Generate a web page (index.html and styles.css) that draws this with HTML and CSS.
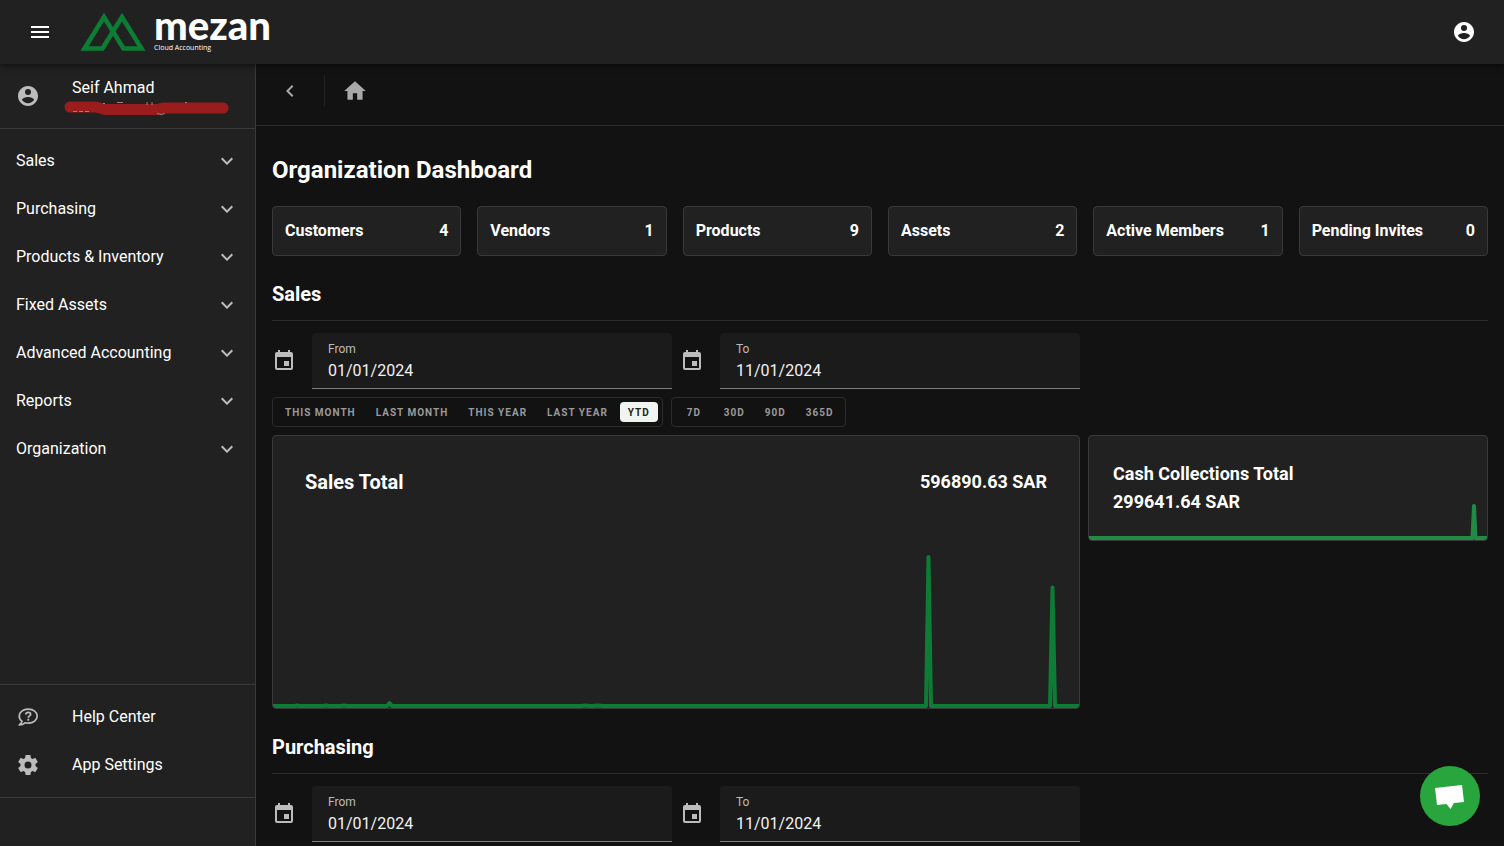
FILE: index.html
```html
<!DOCTYPE html>
<html lang="en">
<head>
    <meta charset="UTF-8">
    <meta name="viewport" content="width=device-width, initial-scale=1.0">
    <title>Mezan Cloud Accounting</title>
    <link rel="stylesheet" href="styles.css">
</head>
<body>

<!-- Shared icons -->
<svg class="icon-defs" aria-hidden="true">
    <symbol id="icon-account" viewBox="0 0 24 24">
        <path d="M12,2C6.48,2 2,6.48 2,12C2,17.52 6.48,22 12,22C17.52,22 22,17.52 22,12C22,6.48 17.52,2 12,2M12,5A3,3 0 0,1 15,8A3,3 0 0,1 12,11A3,3 0 0,1 9,8A3,3 0 0,1 12,5M12,19.2C9.5,19.2 7.29,17.92 6,15.98C6.03,13.99 10,12.9 12,12.9C14,12.9 17.97,13.99 18,15.98C16.71,17.92 14.5,19.2 12,19.2Z"/>
    </symbol>
    <symbol id="icon-chevron" viewBox="0 0 24 24">
        <path d="M7.41,8.58L12,13.17L16.59,8.58L18,10L12,16L6,10L7.41,8.58Z"/>
    </symbol>
    <symbol id="icon-calendar" viewBox="0 0 24 24">
        <path d="M19,19H5V8H19M16,1V3H8V1H6V3H5C3.89,3 3,3.89 3,5V19A2,2 0 0,0 5,21H19A2,2 0 0,0 21,19V5C21,3.89 20.1,3 19,3H18V1M17,12H12V17H17V12Z"/>
    </symbol>
</svg>

<header class="app-bar">
    <button class="icon-btn" aria-label="Menu">
        <svg class="icon" viewBox="0 0 24 24"><path d="M3,6H21V8H3V6M3,11H21V13H3V11M3,16H21V18H3V16Z"/></svg>
    </button>
    <a class="logo" href="#">
        <svg class="logo-mark" viewBox="0 0 66 40">
            <path d="M4.500 36.500L24 5L43.500 36.500H61.500L42 5L22.500 36.500Z" fill="none"/>
        </svg>
        <span class="logo-text">
            <span class="logo-name">mezan</span>
            <span class="logo-tagline">Cloud Accounting</span>
        </span>
    </a>
    <button class="icon-btn account-btn" aria-label="Account">
        <svg class="icon"><use href="#icon-account"/></svg>
    </button>
</header>

<div class="layout">
    <aside class="sidebar">
        <div class="user">
            <svg class="icon"><use href="#icon-account"/></svg>
            <div class="user-info">
                <div class="user-name">Seif Ahmad</div>
                <svg class="user-hidden" viewBox="0 0 166 18">
                    <path class="hidden-bar" d="M6 9H32L41 11.500H93L99 10H159"/>
                    <path class="hidden-text" d="M9 13.500H13M15 13.500H19M21 13.500H25M39 5.500H41M53 4.500H59M83 4V7M88 4V7M93 15.500L97 16.500L101 15.500M121 4.500H123"/>
                </svg>
            </div>
        </div>

        <nav class="menu">
            <button class="menu-item">Sales <svg class="icon"><use href="#icon-chevron"/></svg></button>
            <button class="menu-item">Purchasing <svg class="icon"><use href="#icon-chevron"/></svg></button>
            <button class="menu-item">Products &amp; Inventory <svg class="icon"><use href="#icon-chevron"/></svg></button>
            <button class="menu-item">Fixed Assets <svg class="icon"><use href="#icon-chevron"/></svg></button>
            <button class="menu-item">Advanced Accounting <svg class="icon"><use href="#icon-chevron"/></svg></button>
            <button class="menu-item">Reports <svg class="icon"><use href="#icon-chevron"/></svg></button>
            <button class="menu-item">Organization <svg class="icon"><use href="#icon-chevron"/></svg></button>
        </nav>

        <div class="links">
            <a class="link-item" href="#">
                <svg class="icon" viewBox="0 0 24 24">
                    <path d="M12.200 4.200c-5.200 0-9 2.900-9 6.900 0 2.200 1.100 4 2.800 5.200-.2 1.300-1 2.500-2.800 3.700 2.600-.1 4.500-.9 5.800-2.200 1 .3 2.100.4 3.200.4 5.200 0 9-3 9-7.100s-3.800-6.900-9-6.900z" fill="none" stroke="currentColor" stroke-width="1.700" stroke-linejoin="round"/>
                    <path d="M9.800 9.400c0-1.300 1-2 2.400-2s2.400.8 2.400 1.900c0 1.600-2.300 1.600-2.300 3.400M12.300 13.800v1.900" fill="none" stroke="currentColor" stroke-width="1.800"/>
                </svg>
                Help Center
            </a>
            <a class="link-item" href="#">
                <svg class="icon" viewBox="0 0 24 24"><path d="M12,15.5A3.5,3.5 0 0,1 8.5,12A3.5,3.5 0 0,1 12,8.5A3.5,3.5 0 0,1 15.500,12A3.500,3.500 0 0,1 12,15.500M19.430,12.970C19.470,12.650 19.500,12.330 19.500,12C19.500,11.670 19.470,11.340 19.430,11L21.540,9.370C21.730,9.220 21.780,8.950 21.660,8.730L19.660,5.270C19.540,5.050 19.270,4.960 19.050,5.050L16.560,6.050C16.040,5.660 15.500,5.320 14.870,5.070L14.500,2.420C14.460,2.180 14.250,2 14,2H10C9.750,2 9.540,2.180 9.500,2.420L9.130,5.070C8.500,5.320 7.960,5.660 7.440,6.050L4.950,5.050C4.730,4.960 4.460,5.050 4.340,5.270L2.340,8.730C2.210,8.950 2.270,9.220 2.460,9.370L4.570,11C4.530,11.340 4.500,11.670 4.500,12C4.500,12.330 4.530,12.650 4.570,12.970L2.460,14.630C2.270,14.780 2.210,15.050 2.340,15.270L4.340,18.730C4.460,18.950 4.730,19.030 4.950,18.950L7.440,17.940C7.960,18.340 8.500,18.680 9.130,18.930L9.500,21.580C9.540,21.820 9.750,22 10,22H14C14.250,22 14.460,21.820 14.500,21.580L14.870,18.930C15.500,18.670 16.040,18.340 16.560,17.940L19.050,18.950C19.270,19.030 19.540,18.950 19.660,18.730L21.660,15.270C21.780,15.050 21.730,14.780 21.540,14.630L19.430,12.970Z"/></svg>
                App Settings
            </a>
        </div>
    </aside>

    <main class="content">
        <div class="toolbar">
            <button class="back-btn" aria-label="Back">
                <svg class="icon" viewBox="0 0 24 24"><path d="M15.410,16.580L10.830,12L15.410,7.410L14,6L8,12L14,18L15.410,16.580Z"/></svg>
            </button>
            <a class="home-link" href="#" aria-label="Home">
                <svg class="icon" viewBox="0 0 24 24"><path d="M10,20V14H14V20H19V12H22L12,3L2,12H5V20H10Z"/></svg>
            </a>
        </div>

        <div class="page">
            <h1>Organization Dashboard</h1>

            <div class="stats">
                <div class="stat"><span>Customers</span><span>4</span></div>
                <div class="stat"><span>Vendors</span><span>1</span></div>
                <div class="stat"><span>Products</span><span>9</span></div>
                <div class="stat"><span>Assets</span><span>2</span></div>
                <div class="stat"><span>Active Members</span><span>1</span></div>
                <div class="stat"><span>Pending Invites</span><span>0</span></div>
            </div>

            <section>
                <h2>Sales</h2>
                <div class="grid">
                    <div class="date">
                        <svg class="icon"><use href="#icon-calendar"/></svg>
                        <div class="field">
                            <label for="sales-from">From</label>
                            <input id="sales-from" type="text" value="01/01/2024">
                        </div>
                    </div>
                    <div class="date">
                        <svg class="icon"><use href="#icon-calendar"/></svg>
                        <div class="field">
                            <label for="sales-to">To</label>
                            <input id="sales-to" type="text" value="11/01/2024">
                        </div>
                    </div>
                </div>

                <div class="ranges">
                    <div class="range-group">
                        <button>This month</button>
                        <button>Last month</button>
                        <button>This year</button>
                        <button>Last year</button>
                        <button class="active">YTD</button>
                    </div>
                    <div class="range-group">
                        <button>7D</button>
                        <button>30D</button>
                        <button>90D</button>
                        <button>365D</button>
                    </div>
                </div>

                <div class="grid">
                    <div class="card sales-card">
                        <div class="card-head">
                            <h3>Sales Total</h3>
                            <div class="amount">596890.63 SAR</div>
                        </div>
                        <svg class="chart" viewBox="0 0 806 160" preserveAspectRatio="none">
                            <path d="M0 158H22L24 157.500L26 158H50L53 157.500L56 158H68L71 157.500L74 158H114L116.500 155L119 158H308L312 157.500L316 158H319L325 157.500L331 158H653L655.500 9L658 158H777L779.500 39.500L782 158H806"/>
                        </svg>
                    </div>
                    <div class="card cash-card">
                        <h3>Cash Collections Total</h3>
                        <div class="amount">299641.64 SAR</div>
                        <svg class="chart" viewBox="0 0 398 36" preserveAspectRatio="none">
                            <path d="M0 34H383.500L385 2L386.500 34H398"/>
                        </svg>
                    </div>
                </div>
            </section>

            <section>
                <h2>Purchasing</h2>
                <div class="grid">
                    <div class="date">
                        <svg class="icon"><use href="#icon-calendar"/></svg>
                        <div class="field">
                            <label for="purchasing-from">From</label>
                            <input id="purchasing-from" type="text" value="01/01/2024">
                        </div>
                    </div>
                    <div class="date">
                        <svg class="icon"><use href="#icon-calendar"/></svg>
                        <div class="field">
                            <label for="purchasing-to">To</label>
                            <input id="purchasing-to" type="text" value="11/01/2024">
                        </div>
                    </div>
                </div>
            </section>
        </div>
    </main>
</div>

<button class="chat-btn" aria-label="Chat">
    <svg viewBox="0 0 60 60"><path d="M15 22L42 19L44 36L34 37L30.500 43L26.500 38L17 39Z"/></svg>
</button>

</body>
</html>
```
FILE: styles.css
```css
* {
    box-sizing: border-box;
}
body {
    margin: 0;
    height: 100vh;
    display: flex;
    flex-direction: column;
    overflow: hidden;
    background: #121212;
    color: #fff;
    font-family: Roboto, sans-serif;
    font-size: 16px;
    line-height: 24px;
}
button {
    border: 0;
    padding: 0;
    background: none;
    color: inherit;
    font: inherit;
    cursor: pointer;
}
a {
    color: inherit;
    text-decoration: none;
}
h1, h2, h3 {
    margin: 0;
    font-weight: 700;
}
.icon-defs {
    position: absolute;
    width: 0;
    height: 0;
}
.icon {
    display: block;
    flex: none;
    width: 24px;
    height: 24px;
    fill: currentColor;
}

/* Top bar */
.app-bar {
    display: flex;
    align-items: center;
    flex: none;
    height: 64px;
    padding: 0 16px;
    background: #212121;
    box-shadow: 0 2px 6px rgba(0, 0, 0, 0.5);
    z-index: 2;
}
.icon-btn {
    display: flex;
    align-items: center;
    justify-content: center;
    width: 48px;
    height: 48px;
}
.logo {
    display: flex;
    align-items: center;
    gap: 8px;
    margin-left: 16px;
}
.logo-mark {
    width: 66px;
    height: 40px;
    stroke: #0c7d35;
    stroke-width: 4.6;
}
.logo-text {
    display: flex;
    flex-direction: column;
    gap: 6px;
}
.logo-name {
    font-family: Lato, sans-serif;
    font-size: 40px;
    font-weight: 900;
    line-height: 26px;
}
.logo-tagline {
    font-family: "Open Sans", sans-serif;
    font-size: 7px;
    line-height: 8px;
}
.account-btn {
    margin-left: auto;
}

/* Sidebar */
.layout {
    display: flex;
    flex: 1;
    min-height: 0;
}
.sidebar {
    display: flex;
    flex-direction: column;
    flex: none;
    width: 256px;
    padding-bottom: 48px;
    background: #212121;
    border-right: 1px solid #3a3a3a;
}
.sidebar .icon {
    color: #bcbcbc;
}
.user {
    display: flex;
    align-items: center;
    height: 65px;
    padding: 0 16px;
    border-bottom: 1px solid #3a3a3a;
}
.user-info {
    margin-left: 32px;
    padding-top: 2px;
}
.user-name {
    line-height: 20px;
}
.user-hidden {
    display: block;
    width: 166px;
    height: 18px;
    margin-left: -8px;
    fill: none;
}
.hidden-bar {
    stroke: #9b1c1c;
    stroke-width: 11;
    stroke-linecap: round;
    stroke-linejoin: round;
}
.hidden-text {
    stroke: #a08080;
}
.menu {
    flex: 1;
    padding: 8px 0;
}
.menu-item {
    display: flex;
    align-items: center;
    justify-content: space-between;
    width: 100%;
    height: 48px;
    padding: 0 16px;
}
.links {
    padding: 8px 0;
    border-top: 1px solid #3a3a3a;
    border-bottom: 1px solid #3a3a3a;
}
.link-item {
    display: flex;
    align-items: center;
    gap: 32px;
    height: 48px;
    padding: 0 16px;
}

/* Content */
.content {
    flex: 1;
    min-width: 0;
    overflow-y: auto;
    scrollbar-width: none;
}
.toolbar {
    display: flex;
    align-items: center;
    height: 62px;
    padding: 0 16px 8px;
    border-bottom: 1px solid #2c2c2c;
    color: #a8a8a8;
}
.back-btn {
    display: flex;
    align-items: center;
    width: 53px;
    height: 32px;
    padding-left: 6px;
    border-right: 1px solid #222;
}
.home-link {
    margin-left: 17px;
}
.home-link .icon {
    width: 26px;
    height: 26px;
}
.page {
    padding: 28px 16px 16px;
}
h1 {
    font-size: 24px;
    line-height: 32px;
}
.stats {
    display: grid;
    grid-template-columns: repeat(6, 1fr);
    gap: 16px;
    margin: 20px 0 24px;
}
.stat {
    display: flex;
    justify-content: space-between;
    padding: 12px;
    background: #212121;
    border: 1px solid #393939;
    border-radius: 4px;
    font-weight: 700;
}
h2 {
    margin-bottom: 12px;
    padding-bottom: 12px;
    border-bottom: 1px solid #2c2c2c;
    font-size: 20px;
    line-height: 28px;
}
section + section {
    margin-top: 24px;
}
.grid {
    display: grid;
    grid-template-columns: repeat(12, 1fr);
    gap: 8px;
    align-items: start;
}
.date {
    grid-column: span 4;
    display: flex;
    align-items: center;
    gap: 16px;
    color: #bcbcbc;
}
.field {
    flex: 1;
    min-width: 0;
    height: 56px;
    padding: 8px 16px;
    background: #1b1b1b;
    border-bottom: 1px solid #7d7d7d;
    border-radius: 4px 4px 0 0;
}
.field label {
    display: block;
    font-size: 12px;
    line-height: 16px;
}
.field input {
    display: block;
    width: 100%;
    height: 26px;
    padding: 0;
    border: 0;
    outline: 0;
    background: none;
    color: #f2f2f2;
    font: inherit;
}
.ranges {
    display: flex;
    gap: 8px;
    margin: 8px 0;
}
.range-group {
    display: flex;
    gap: 4px;
    padding: 4px;
    border: 1px solid #2c2c2c;
    border-radius: 4px;
}
.range-group button {
    min-width: 36px;
    height: 20px;
    padding: 1px 8px 0;
    border-radius: 4px;
    color: #9a9a9a;
    font-size: 10px;
    font-weight: 700;
    line-height: 20px;
    letter-spacing: 1px;
    text-transform: uppercase;
}
.range-group .active {
    background: #f1f5f1;
    color: #222;
}
.card {
    display: flex;
    flex-direction: column;
    background: #212121;
    border: 1px solid #393939;
    border-radius: 4px;
    overflow: hidden;
}
.sales-card {
    grid-column: span 8;
}
.cash-card {
    grid-column: span 4;
}
.card-head {
    display: flex;
    align-items: center;
    justify-content: space-between;
    padding: 32px 32px 52px;
}
h3 {
    font-size: 20px;
    line-height: 28px;
}
.amount {
    font-size: 18px;
    font-weight: 700;
    line-height: 28px;
}
.chart {
    display: block;
    width: 100%;
    fill: none;
    stroke: #0c7d35;
    stroke-width: 4;
    stroke-linejoin: round;
}
.chart path {
    vector-effect: non-scaling-stroke;
}
.sales-card .chart {
    height: 160px;
}
.cash-card {
    padding-top: 24px;
}
.cash-card h3,
.cash-card .amount {
    padding: 0 24px;
    font-size: 18px;
}
.cash-card .chart {
    height: 36px;
    margin-top: -12px;
    stroke: #238a46;
}

/* Chat bubble */
.chat-btn {
    position: fixed;
    right: 24px;
    bottom: 20px;
    width: 60px;
    height: 60px;
    border-radius: 50%;
    background: #28a53c;
    z-index: 3;
}
.chat-btn svg {
    display: block;
    fill: #fff;
}
```
